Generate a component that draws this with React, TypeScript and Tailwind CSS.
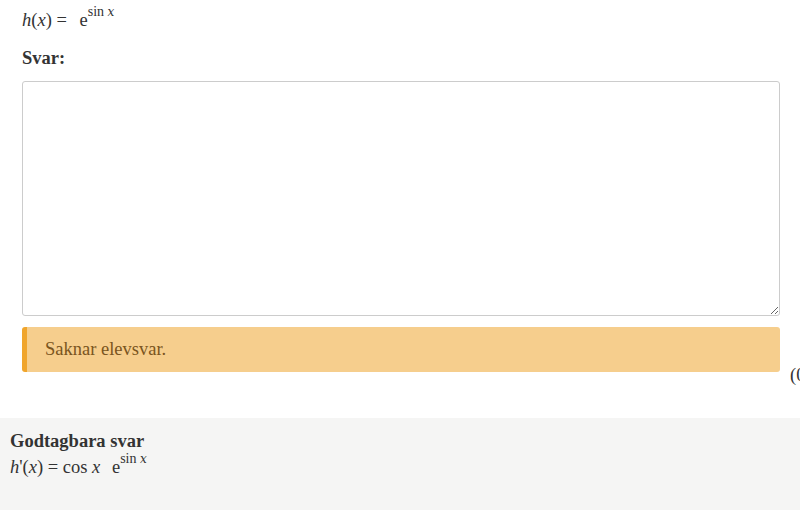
const Exp = ({ gap }: { gap: string }) => (
  <span className={gap}>
    e<sup className="relative -top-[3px] text-[14px] align-super leading-none">
      sin <i className="font-['DejaVu_Serif'] text-[12px]">x</i>
    </sup>
  </span>
);

export default function App() {
  return (
    <div className="w-[800px] h-[510px] overflow-hidden bg-white text-[#333] font-['Liberation_Serif',serif] text-[18.5px]">
      <div className="h-[418px] flex">
        <div className="w-[22px] shrink-0 relative text-[#888]">
          <span className="absolute -left-[7px] top-[7px] text-[16px]">)</span>
        </div>
        <div className="w-[758px] shrink-0 pt-[7px]">
          <div className="leading-[26px]">
            <i>h</i>(<i>x</i>) = <Exp gap="ml-[8px]" />
          </div>
          <div className="mt-[12px] font-bold leading-[26px]">Svar:</div>
          <textarea className="mt-[10px] block w-full h-[235px] border border-[#ccc] rounded-[3px] resize-y bg-white" />
          <div className="mt-[11px] h-[45px] flex items-center pl-[18px] bg-[#f6ce8d] border-l-[5px] border-[#f0a52c] rounded-[3px] text-[#7a5520]">
            Saknar elevsvar.
          </div>
        </div>
        <div className="pl-[10px] pt-[362px] whitespace-nowrap leading-[26px]">(0 p)</div>
      </div>
      <div className="h-[92px] bg-[#f5f5f4] px-[10px] pt-[10px] leading-[26px]">
        <div className="font-bold">Godtagbara svar</div>
        <div>
          <i>h</i>'(<i>x</i>) = cos <i>x</i> <Exp gap="ml-[7px]" />
        </div>
      </div>
    </div>
  );
}
